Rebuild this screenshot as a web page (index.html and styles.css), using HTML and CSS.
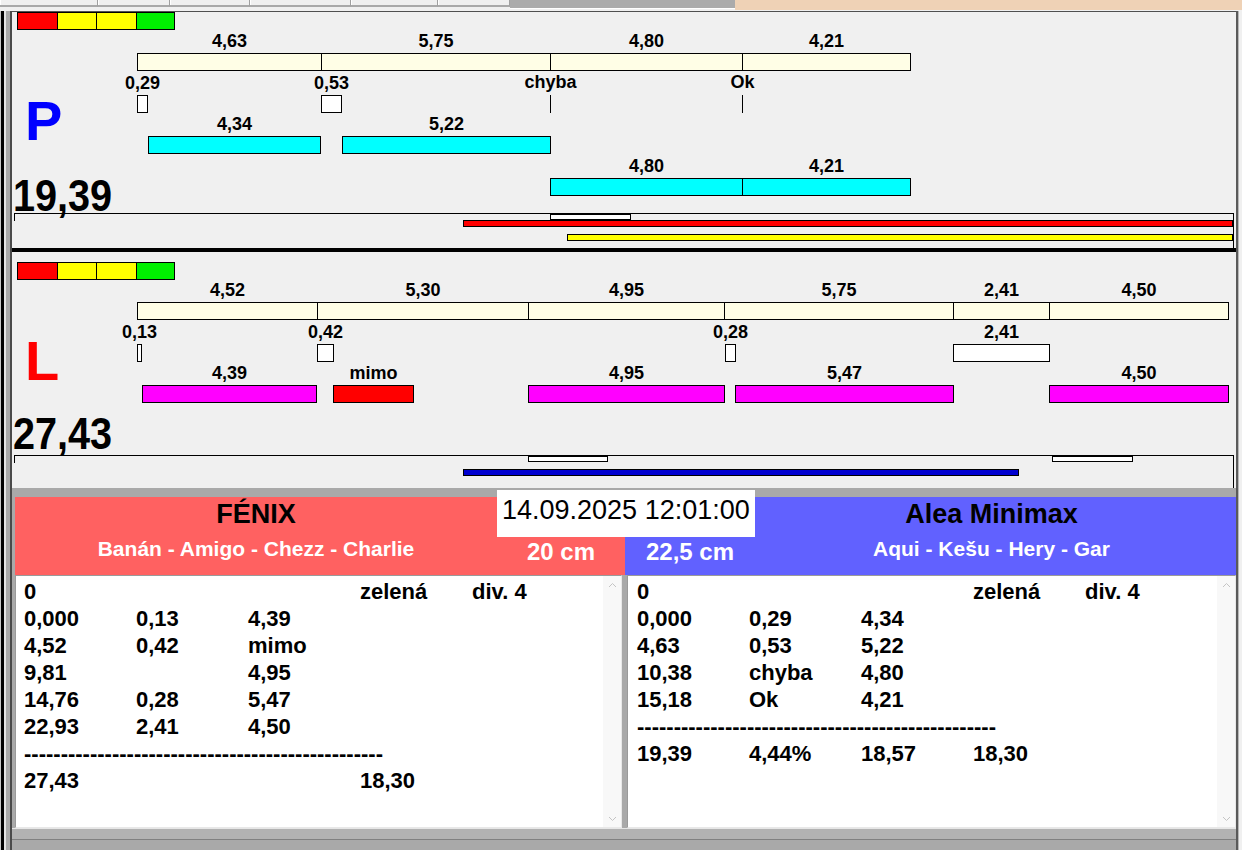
FILE: index.html
```html
<!DOCTYPE html>
<html lang="cs">
<head>
    <meta charset="UTF-8">
    <title>Agility - běh</title>
    <link rel="stylesheet" href="styles.css">
</head>
<body>
<div class="app">
    <div class="tabs">
        <div class="tab" style="width:98px"></div>
        <div class="tab" style="width:72px"></div>
        <div class="tab" style="width:80px"></div>
        <div class="tab" style="width:101px"></div>
        <div class="tab" style="width:87px"></div>
        <div class="tab" style="width:72px"></div>
        <div class="tab-fill"></div>
        <div class="tab-peach"></div>
    </div>

    <div class="frame">
        <div class="edge-l"></div>
        <div class="content">

            <!-- pravý / P -->
            <div class="chart chart-p">
                <div class="swatches"><i class="sw red"></i><i class="sw yellow"></i><i class="sw yellow"></i><i class="sw green"></i></div>
                <div class="row r-main">
                    <div class="seg cream" style="left:125px;width:185px"><b class="lbl">4,63</b></div>
                    <div class="seg cream" style="left:309px;width:230px"><b class="lbl">5,75</b></div>
                    <div class="seg cream" style="left:538px;width:193px"><b class="lbl">4,80</b></div>
                    <div class="seg cream" style="left:730px;width:169px"><b class="lbl">4,21</b></div>
                </div>
                <div class="row r-marks">
                    <div class="seg white" style="left:125px;width:11px"><b class="lbl">0,29</b></div>
                    <div class="seg white" style="left:309px;width:21px"><b class="lbl">0,53</b></div>
                    <div class="seg tick" style="left:538px"><b class="lbl">chyba</b></div>
                    <div class="seg tick" style="left:730px"><b class="lbl">Ok</b></div>
                </div>
                <div class="row r-a">
                    <div class="seg cyan" style="left:136px;width:173px"><b class="lbl">4,34</b></div>
                    <div class="seg cyan" style="left:330px;width:209px"><b class="lbl">5,22</b></div>
                </div>
                <div class="row r-b">
                    <div class="seg cyan" style="left:538px;width:193px"><b class="lbl">4,80</b></div>
                    <div class="seg cyan" style="left:730px;width:169px"><b class="lbl">4,21</b></div>
                </div>
                <div class="strip">
                    <div class="seg white" style="left:536px;width:81px;top:0;height:6px"></div>
                    <div class="seg red" style="left:449px;width:770px;top:6px;height:7px"></div>
                    <div class="seg yellow" style="left:553px;width:666px;top:20px;height:7px"></div>
                </div>
                <span class="big-letter blue-text">P</span>
                <span class="big-total">19,39</span>
            </div>

            <div class="chart-sep"></div>

            <!-- levý / L -->
            <div class="chart chart-l">
                <div class="swatches"><i class="sw red"></i><i class="sw yellow"></i><i class="sw yellow"></i><i class="sw green"></i></div>
                <div class="row r-main">
                    <div class="seg cream" style="left:125px;width:181px"><b class="lbl">4,52</b></div>
                    <div class="seg cream" style="left:305px;width:212px"><b class="lbl">5,30</b></div>
                    <div class="seg cream" style="left:516px;width:197px"><b class="lbl">4,95</b></div>
                    <div class="seg cream" style="left:712px;width:230px"><b class="lbl">5,75</b></div>
                    <div class="seg cream" style="left:941px;width:97px"><b class="lbl">2,41</b></div>
                    <div class="seg cream" style="left:1037px;width:180px"><b class="lbl">4,50</b></div>
                </div>
                <div class="row r-marks">
                    <div class="seg white" style="left:125px;width:5px"><b class="lbl">0,13</b></div>
                    <div class="seg white" style="left:305px;width:17px"><b class="lbl">0,42</b></div>
                    <div class="seg white" style="left:713px;width:11px"><b class="lbl">0,28</b></div>
                    <div class="seg white" style="left:941px;width:97px"><b class="lbl">2,41</b></div>
                </div>
                <div class="row r-a">
                    <div class="seg magenta" style="left:130px;width:175px"><b class="lbl">4,39</b></div>
                    <div class="seg red" style="left:321px;width:81px"><b class="lbl">mimo</b></div>
                    <div class="seg magenta" style="left:516px;width:197px"><b class="lbl">4,95</b></div>
                    <div class="seg magenta" style="left:723px;width:219px"><b class="lbl">5,47</b></div>
                    <div class="seg magenta" style="left:1037px;width:180px"><b class="lbl">4,50</b></div>
                </div>
                <div class="strip">
                    <div class="seg white" style="left:514px;width:80px;top:0;height:6px"></div>
                    <div class="seg white" style="left:1038px;width:81px;top:0;height:6px"></div>
                    <div class="seg blue" style="left:449px;width:556px;top:13px;height:7px"></div>
                </div>
                <span class="big-letter red-text">L</span>
                <span class="big-total">27,43</span>
            </div>

            <div class="band"></div>

            <div class="teams">
                <div class="team team-red">
                    <div class="team-main">
                        <div class="team-name">FÉNIX</div>
                        <div class="team-dogs">Banán - Amigo - Chezz - Charlie</div>
                    </div>
                    <div class="team-side">20 cm</div>
                </div>
                <div class="team team-blue">
                    <div class="team-side">22,5 cm</div>
                    <div class="team-main">
                        <div class="team-name">Alea Minimax</div>
                        <div class="team-dogs">Aqui - Kešu - Hery - Gar</div>
                    </div>
                </div>
                <div class="datetime">14.09.2025 12:01:00</div>
            </div>

            <div class="logs">
                <div class="log log-left">
                    <div class="log-text">
                        <div class="line"><span>0</span><span></span><span></span><span>zelená</span><span>div. 4</span></div>
                        <div class="line"><span>0,000</span><span>0,13</span><span>4,39</span></div>
                        <div class="line"><span>4,52</span><span>0,42</span><span>mimo</span></div>
                        <div class="line"><span>9,81</span><span></span><span>4,95</span></div>
                        <div class="line"><span>14,76</span><span>0,28</span><span>5,47</span></div>
                        <div class="line"><span>22,93</span><span>2,41</span><span>4,50</span></div>
                        <div class="line dashes">-------------------------------------------------</div>
                        <div class="line"><span>27,43</span><span></span><span></span><span>18,30</span></div>
                    </div>
                    <div class="scroll">
                        <svg width="9" height="6" viewBox="0 0 9 6"><polyline points="1,5 4.5,1.5 8,5" fill="none" stroke="#c4c4c4" stroke-width="1"/></svg>
                        <svg width="9" height="6" viewBox="0 0 9 6"><polyline points="1,1 4.5,4.5 8,1" fill="none" stroke="#c4c4c4" stroke-width="1"/></svg>
                    </div>
                </div>
                <div class="log log-right">
                    <div class="log-text">
                        <div class="line"><span>0</span><span></span><span></span><span>zelená</span><span>div. 4</span></div>
                        <div class="line"><span>0,000</span><span>0,29</span><span>4,34</span></div>
                        <div class="line"><span>4,63</span><span>0,53</span><span>5,22</span></div>
                        <div class="line"><span>10,38</span><span>chyba</span><span>4,80</span></div>
                        <div class="line"><span>15,18</span><span>Ok</span><span>4,21</span></div>
                        <div class="line dashes">-------------------------------------------------</div>
                        <div class="line"><span>19,39</span><span>4,44%</span><span>18,57</span><span>18,30</span></div>
                    </div>
                    <div class="scroll">
                        <svg width="9" height="6" viewBox="0 0 9 6"><polyline points="1,5 4.5,1.5 8,5" fill="none" stroke="#c4c4c4" stroke-width="1"/></svg>
                        <svg width="9" height="6" viewBox="0 0 9 6"><polyline points="1,1 4.5,4.5 8,1" fill="none" stroke="#c4c4c4" stroke-width="1"/></svg>
                    </div>
                </div>
            </div>

            <div class="status"></div>
        </div>
        <div class="edge-r"></div>
    </div>
</div>
</body>
</html>
```

FILE: styles.css
```css
html, body {
    margin: 0;
    padding: 0;
}
body {
    font-family: "Liberation Sans", Arial, sans-serif;
    background: #f0f0f0;
    color: #000;
}
.app {
    width: 1242px;
    height: 850px;
    display: flex;
    flex-direction: column;
    overflow: hidden;
}

/* top tab strip */
.tabs {
    height: 11px;
    display: flex;
    flex: none;
    background: #f0f0f0;
}
.tab {
    height: 7px;
    box-sizing: border-box;
    border-bottom: 2px solid #a9a9a9;
    border-right: 1px solid #a0a0a0;
    box-shadow: inset 1px 0 #fff;
}
.tab-fill {
    width: 225px;
    height: 8px;
    background: #ababab;
    border-bottom: 1px solid #fff;
}
.tab-peach {
    flex: 1;
    height: 10px;
    background: #efd2b6;
}

.frame {
    flex: 1;
    display: flex;
}
.edge-l {
    width: 12px;
    flex: none;
    background: linear-gradient(to right, #c8c8c8 0 1px, #000 1px 4px, #e4e4e4 4px 6px, #a8a8a8 6px 10px, #4a4a4a 10px 12px);
}
.edge-r {
    width: 6px;
    flex: none;
    background: linear-gradient(to right, #5a5a5a 0 2px, #b8b8b8 2px 3px, #f0f0f0 3px);
}
.content {
    width: 1224px;
    display: flex;
    flex-direction: column;
}

/* charts */
.chart {
    position: relative;
    background: #f0f0f0;
    flex: none;
}
.chart-p {
    height: 236px;
    border-top: 1px solid #505050;
}
.chart-l {
    height: 236px;
}
.chart-sep {
    height: 4px;
    background: #000;
    flex: none;
}
.swatches {
    display: flex;
    width: 158px;
    height: 18px;
    margin-left: 5px;
    box-sizing: border-box;
    border: 1px solid #000;
}
.sw {
    width: 40px;
    height: 100%;
    box-sizing: border-box;
    border-right: 1px solid #000;
}
.sw:last-child {
    width: 38px;
    border-right: 0;
}
.row {
    position: relative;
    height: 18px;
}
.chart-p .r-main { margin-top: 23px; }
.chart-p .r-marks { margin-top: 24px; }
.chart-p .r-a { margin-top: 23px; }
.chart-p .r-b { margin-top: 24px; }
.chart-p .strip { margin-top: 17px; height: 35px; }

.chart-l .swatches { margin-top: 10px; }
.chart-l .r-main { margin-top: 22px; }
.chart-l .r-marks { margin-top: 24px; }
.chart-l .r-a { margin-top: 23px; }
.chart-l .strip { margin-top: 52px; height: 33px; }

.seg {
    position: absolute;
    top: 0;
    height: 100%;
    box-sizing: border-box;
    border: 1px solid #000;
}
.seg.tick {
    width: 1px;
    border: 0;
    background: #000;
}
.lbl {
    position: absolute;
    top: -22px;
    left: 50%;
    transform: translateX(-50%);
    font-size: 18px;
    line-height: 18px;
    font-weight: bold;
    white-space: nowrap;
}
.cream { background: #fffee6; }
.white { background: #fff; }
.cyan { background: #00ffff; }
.magenta { background: #ff00ff; }
.red { background: #ff0000; }
.yellow { background: #ffff00; }
.green { background: #00f000; }
.blue { background: #0000d0; }

.strip {
    position: relative;
    width: 1220px;
    margin-left: 2px;
    box-sizing: border-box;
    border-top: 1px solid #000;
    border-right: 1px solid #000;
}
.strip::before {
    content: "";
    position: absolute;
    left: 0;
    top: 0;
    width: 1px;
    height: 7px;
    background: #000;
}
.strip .seg { height: 7px; }

.big-letter {
    position: absolute;
    left: 13px;
    top: 81px;
    font-size: 56px;
    line-height: 1;
    font-weight: bold;
}
.blue-text { color: #0000ff; }
.red-text { color: #ff0000; }
.big-total {
    position: absolute;
    left: 1px;
    top: 162px;
    font-size: 44px;
    line-height: 1;
    font-weight: bold;
    transform: scaleX(0.9);
    transform-origin: left top;
}
.chart-l .big-total { top: 160px; }

/* team headers */
.band {
    height: 9px;
    background: #a9a9a9;
    flex: none;
}
.teams {
    position: relative;
    height: 78px;
    display: flex;
    padding-left: 3px;
    background: #a9a9a9;
    flex: none;
}
.team {
    display: flex;
    height: 100%;
}
.team-red {
    width: 610px;
    background: #ff6161;
}
.team-blue {
    flex: 1;
    background: #6161ff;
}
.team-red .team-main { width: 482px; }
.team-red .team-side { width: 128px; }
.team-blue .team-side { width: 130px; }
.team-blue .team-main { flex: 1; padding-right: 8px; }
.team-main {
    text-align: center;
}
.team-name {
    font-size: 27px;
    line-height: 34px;
    font-weight: bold;
}
.team-dogs {
    font-size: 21px;
    line-height: 36px;
    font-weight: bold;
    color: #fff;
}
.team-side {
    padding-top: 40px;
    box-sizing: border-box;
    text-align: center;
    font-size: 24px;
    line-height: 30px;
    font-weight: bold;
    color: #fff;
}
.datetime {
    position: absolute;
    left: 485px;
    top: -7px;
    width: 258px;
    height: 47px;
    padding-left: 5px;
    box-sizing: border-box;
    background: #fff;
    font-size: 27px;
    line-height: 40px;
}

/* result logs */
.logs {
    height: 253px;
    display: flex;
    gap: 5px;
    padding-left: 3px;
    background: #a9a9a9;
    flex: none;
}
.log {
    display: flex;
    background: #fff;
    box-sizing: border-box;
    border: 1px solid #9a9a9a;
    border-right-color: #e8e8e8;
    border-bottom-color: #e8e8e8;
}
.log-left { width: 607px; }
.log-right { flex: 1; }
.log-text {
    flex: 1;
    padding: 2px 0 0 8px;
}
.log-right .log-text { padding-left: 9px; }
.line {
    display: grid;
    grid-template-columns: repeat(5, 112px);
    height: 27px;
    font-size: 22px;
    line-height: 27px;
    font-weight: bold;
    white-space: nowrap;
}
.line.dashes {
    display: block;
}
.scroll {
    width: 18px;
    background: #f8f8f8;
    display: flex;
    flex-direction: column;
    justify-content: space-between;
    align-items: center;
    padding: 6px 0 5px;
}

.status {
    flex: 1;
    background: #a9a9a9;
    border-top: 1px solid #e6e6e6;
    box-shadow: inset 0 10px #b2b2b2, inset 0 11px #808080;
}
```
